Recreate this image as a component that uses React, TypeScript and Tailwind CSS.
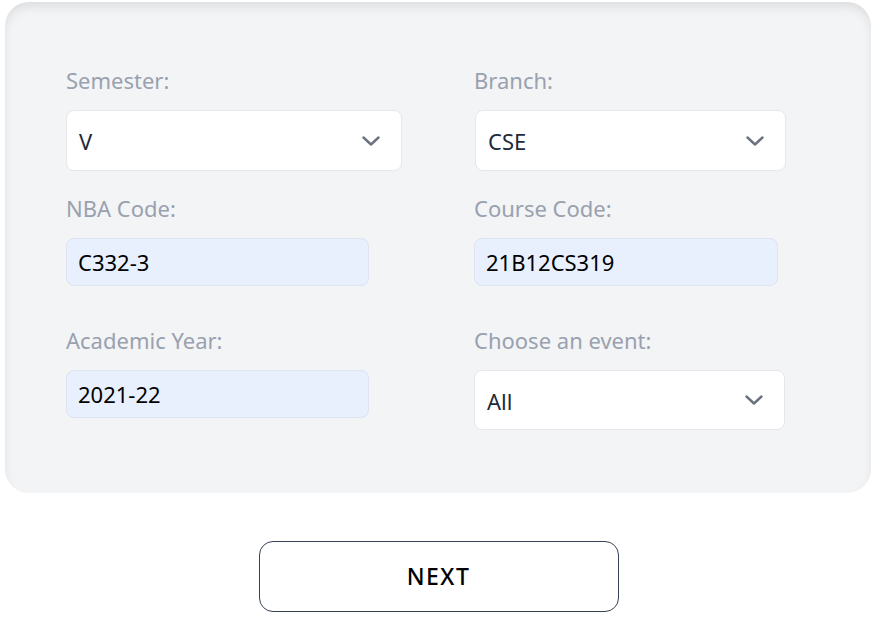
import { useState } from 'react'

const font = { fontFamily: '"Noto Sans", "Open Sans", sans-serif' }

function Chevron() {
  return (
    <svg width="18" height="10" viewBox="0 0 18 10" fill="none" className="shrink-0">
      <path d="M1.5 1.5L9 8.5L16.5 1.5" stroke="#6b7280" strokeWidth="2.4" strokeLinecap="round" strokeLinejoin="round" />
    </svg>
  )
}

function Select({ value, width, height }: { value: string; width: string; height: string }) {
  return (
    <div
      className={`${width} ${height} flex items-center justify-between rounded-lg border border-gray-200 bg-white pl-3 pr-[21px] text-[22px] text-gray-800`}
    >
      <span className="pt-[2px]">{value}</span>
      <Chevron />
    </div>
  )
}

function Field({ value, width }: { value: string; width: string }) {
  const [v, setV] = useState(value)
  return (
    <input
      value={v}
      onChange={(e) => setV(e.target.value)}
      className={`${width} h-[48px] rounded-lg border border-[#dde4ef] bg-[#e8f0fe] pl-[11px] text-[22px] text-black outline-none`}
      style={font}
    />
  )
}

function Label({ children }: { children: string }) {
  return <label className="block text-[22px] leading-[30px] text-gray-400">{children}</label>
}

export default function App() {
  return (
    <main className="min-h-screen bg-white pt-[2px] pl-[5px]" style={font}>
      <section className="w-[866px] rounded-[24px] bg-gray-100 pt-[63px] pb-[63px] pl-[61px] shadow-[inset_0_6px_12px_-2px_rgba(0,0,0,0.1)]">
        <div className="grid grid-cols-[408px_1fr]">
          <div>
            <Label>Semester:</Label>
            <div className="mt-[15px]">
              <Select value="V" width="w-[336px]" height="h-[61px]" />
            </div>
          </div>
          <div>
            <Label>Branch:</Label>
            <div className="mt-[15px] ml-[1px]">
              <Select value="CSE" width="w-[311px]" height="h-[61px]" />
            </div>
          </div>

          <div className="mt-[22px]">
            <Label>NBA Code:</Label>
            <div className="mt-[15px]">
              <Field value="C332-3" width="w-[303px]" />
            </div>
          </div>
          <div className="mt-[22px]">
            <Label>Course Code:</Label>
            <div className="mt-[15px]">
              <Field value="21B12CS319" width="w-[304px]" />
            </div>
          </div>

          <div className="mt-[39px]">
            <Label>Academic Year:</Label>
            <div className="mt-[15px]">
              <Field value="2021-22" width="w-[303px]" />
            </div>
          </div>
          <div className="mt-[39px]">
            <Label>Choose an event:</Label>
            <div className="mt-[15px]">
              <Select value="All" width="w-[311px]" height="h-[60px]" />
            </div>
          </div>
        </div>
      </section>

      <div className="mt-[48px] flex justify-center pr-[5px]">
        <button className="h-[71px] w-[360px] rounded-[14px] border border-gray-700 bg-white text-[23px] font-medium tracking-[1.5px] text-black">
          NEXT
        </button>
      </div>
    </main>
  )
}
